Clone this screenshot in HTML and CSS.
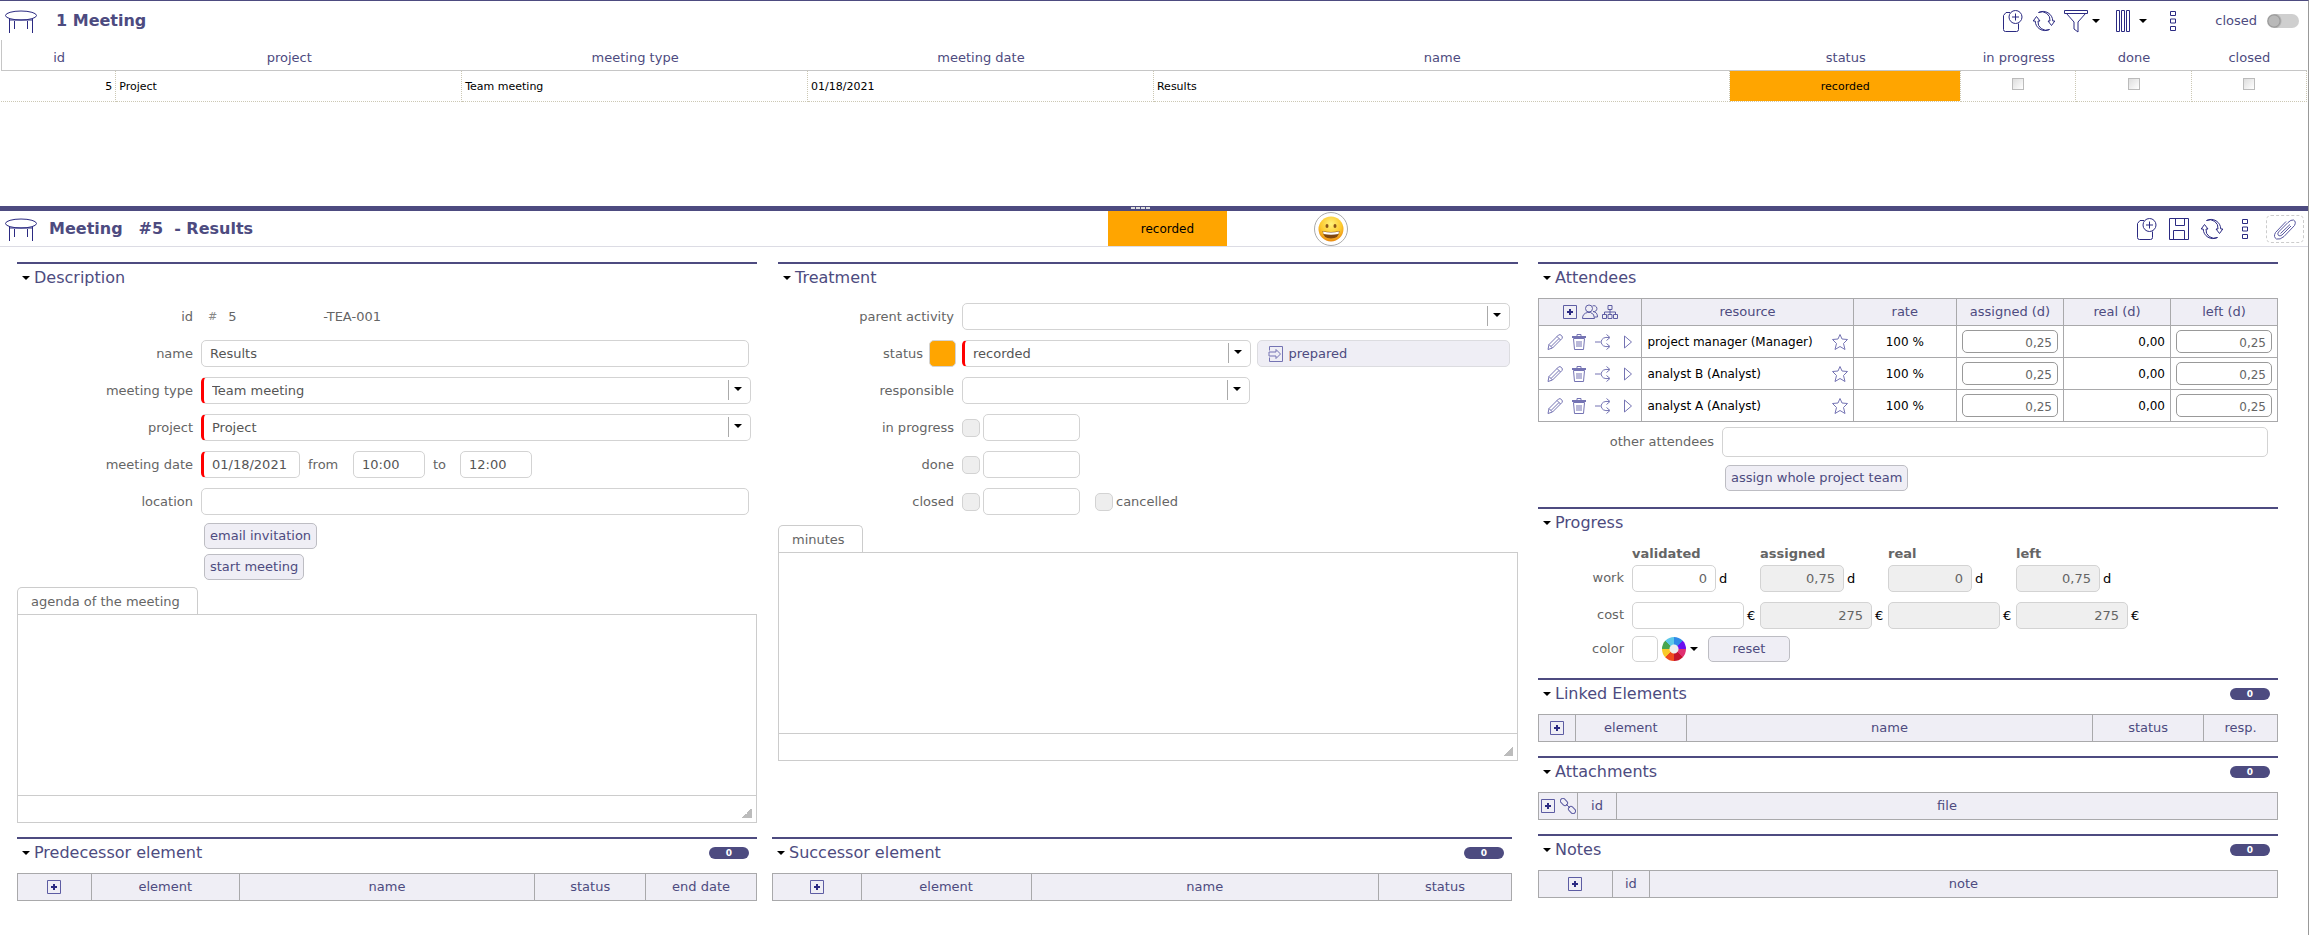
FILE: index.html
```
<!DOCTYPE html>
<html lang="en">
<head>
    <title>Meeting #5 - Results</title>
    <meta charset="UTF-8">
    <meta name="viewport" content="width=device-width, initial-scale=1.0">
    <link rel="stylesheet" href="styles.css">
</head>
<body>
    <!-- icon set -->
    <svg class="sprite" aria-hidden="true">
        <symbol id="i-meeting" viewBox="0 0 34 24"><ellipse cx="17" cy="6.500" rx="15.500" ry="4.500"/><path d="M5.500 9.500V24M28.500 9.500V24M10.500 20v-8M23.500 20v-8M5.500 11h23"/></symbol>
        <symbol id="i-add" viewBox="0 0 24 24"><path d="M10 3.500H6L3.500 6.500v14q0 2 2 2h11q2 0 2-2V14.500"/><circle cx="15.500" cy="8" r="6.500"/><path d="M15.500 4.500v7M12 8h7"/></symbol>
        <symbol id="i-refresh" viewBox="0 0 24 24"><path d="M3.200 12H1.200L4.500 7.500 8 12H6a8.200 8.200 0 0 0 11.500 8.500A9.800 9.800 0 0 1 3.200 12zM20.800 12h2l-3.300 4.500L16 12h2A8.200 8.200 0 0 0 6.500 3.500 9.800 9.800 0 0 1 20.800 12z"/></symbol>
        <symbol id="i-filter" viewBox="0 0 24 24"><path d="M.500 1.500h23v3H.500zM2.500 4.500L10 13v7l4 3V13l7.500-8.500"/></symbol>
        <symbol id="i-columns" viewBox="0 0 24 24"><path d="M5.500 1.500h3v21h-3zM10.500 1.500h3v21h-3zM15.500 1.500h3v21h-3z"/></symbol>
        <symbol id="i-dots" viewBox="0 0 24 24"><path d="M9.500 2.500h5v4h-5zM9.500 10h5v4h-5zM9.500 17.500h5v4h-5z"/></symbol>
        <symbol id="i-save" viewBox="0 0 24 24"><path d="M2.500 1.500h19v21h-19zM8.500 1.500v7h9v-7M6.500 22.500v-9h11v9"/></symbol>
        <symbol id="i-clip" viewBox="0 0 24 24"><path d="M18 9l-9 9q-2 1.500-3.500.500-1.500-1.500 0-3.500L15 5.500q3-3 5.500-2.500 3 1.500 1 5.500L11 19.500q-4 3.500-7.500 2.500-3.500-2-1-6.500L13 4.500M7.500 16.500l9.500-9"/></symbol>
        <symbol id="i-plus" viewBox="0 0 16 16"><path d="M1.500 1.500h13v13h-13z"/><path class="strong" d="M8 5v6M5 8h6"/></symbol>
        <symbol id="i-people" viewBox="0 0 16 16"><circle cx="7" cy="4.500" r="3.500"/><path d="M.500 14.500q0-5 5-6h3q4 1 4 6zM10.500 2a3 3 0 1 1 .5 5.500q4.500.5 4.500 5.500h-3"/></symbol>
        <symbol id="i-tree" viewBox="0 0 16 16"><path d="M6 1.500h4v4H6zM8 5.500V10M2.500 10V8h11v2M.500 10.500h4v4h-4zM6 10.500h4v4H6zM11.500 10.500h4v4h-4z"/></symbol>
        <symbol id="i-pencil" viewBox="0 0 16 16"><path d="M1 15.500l1-5L11.500 1q1.500-1 3 .5t.5 3L5.500 14zM2 10.500L5.500 14M10 2.500L13.500 6M4 12.500l8-8"/></symbol>
        <symbol id="i-trash" viewBox="0 0 16 16"><path d="M1 3.500h14M1 2.500h14M6 2.500v-2h4v2M2.500 4.500l1 11h9l1-11zM6 7v6M8 7v6M10 7v6"/></symbol>
        <symbol id="i-share" viewBox="0 0 16 16"><path d="M0 8h5.500M14 3.500q-7-1-8 4.500 1 5.500 8 4.500M11.500.500L15 3.500l-3.500 3M11.500 9.500l3.500 3-3.500 3"/></symbol>
        <symbol id="i-play" viewBox="0 0 16 16"><path d="M5.500 2v12l7-6z"/></symbol>
        <symbol id="i-star" viewBox="0 0 16 16"><path d="M8 .500l2 4.500 5.500.500-4 4 1.500 6-5-3-5 3 1.500-6-4-4L6 5z"/></symbol>
        <symbol id="i-link" viewBox="0 0 16 16"><rect x="-4" y="-2.500" width="8" height="5" rx="2.500" transform="translate(4 4) rotate(45)"/><rect x="-4" y="-2.500" width="8" height="5" rx="2.500" transform="translate(12 12) rotate(45)"/><path d="M6 6l4 4"/></symbol>
        <symbol id="i-move" viewBox="0 0 16 16"><path d="M1.500 4.500v-4h13v15h-13v-4M1 6h7V3.500L12.500 8 8 12.500V10H1z"/></symbol>
    </svg>

    <!-- list -->
    <section class="list">
        <header class="bar">
            <svg class="meeting-icon"><use href="#i-meeting"/></svg>
            <h1 class="list-title">1 Meeting</h1>
            <div class="tools">
                <button class="tool" aria-label="New"><svg><use href="#i-add"/></svg></button>
                <button class="tool" aria-label="Refresh"><svg><use href="#i-refresh"/></svg></button>
                <button class="tool drop" aria-label="Filter"><svg><use href="#i-filter"/></svg></button>
                <button class="tool drop columns" aria-label="Columns"><svg><use href="#i-columns"/></svg></button>
                <button class="tool more" aria-label="More"><svg><use href="#i-dots"/></svg></button>
                <label class="show-closed">closed <input type="checkbox" class="switch"></label>
            </div>
        </header>
        <table class="grid">
            <thead>
                <tr>
                    <th class="w5">id</th>
                    <th class="w15">project</th>
                    <th class="w15">meeting type</th>
                    <th class="w15">meeting date</th>
                    <th class="w25">name</th>
                    <th class="w10">status</th>
                    <th class="w5">in progress</th>
                    <th class="w5">done</th>
                    <th class="w5">closed</th>
                </tr>
            </thead>
            <tbody>
                <tr>
                    <td class="num">5</td>
                    <td>Project</td>
                    <td>Team meeting</td>
                    <td>01/18/2021</td>
                    <td>Results</td>
                    <td class="recorded">recorded</td>
                    <td class="tick"><input type="checkbox" aria-label="in progress" disabled></td>
                    <td class="tick"><input type="checkbox" aria-label="done" disabled></td>
                    <td class="tick"><input type="checkbox" aria-label="closed" disabled></td>
                </tr>
            </tbody>
        </table>
    </section>

    <div class="splitter"><span class="grip"></span></div>

    <!-- detail -->
    <header class="bar detail-bar">
        <div class="detail-title">
            <svg class="meeting-icon"><use href="#i-meeting"/></svg>
            <h2>Meeting</h2>
            <h2 class="ref">#5</h2>
            <h2>- Results</h2>
        </div>
        <div class="status-flag">recorded</div>
        <div class="avatar">
            <svg viewBox="0 0 26 26">
                <defs>
                    <radialGradient id="face" cx=".5" cy=".3" r=".7">
                        <stop offset="0" stop-color="#fff27a"/>
                        <stop offset=".6" stop-color="#fdc92d"/>
                        <stop offset="1" stop-color="#ea8a10"/>
                    </radialGradient>
                </defs>
                <circle cx="13" cy="13" r="12.500" fill="url(#face)"/>
                <ellipse cx="9" cy="10" rx="1.500" ry="2" fill="#8a5416"/>
                <ellipse cx="17" cy="10" rx="1.500" ry="2" fill="#8a5416"/>
                <path d="M4.500 15q8.500 2 17 0-.500 7.500-8.500 7.500T4.500 15z" fill="#80470f"/>
                <path d="M5 15.500q8 2 16 0l-.500 2.500q-7.500 1.500-15 0z" fill="#fff"/>
            </svg>
        </div>
        <div class="tools">
            <button class="tool" aria-label="New"><svg><use href="#i-add"/></svg></button>
            <button class="tool" aria-label="Save"><svg><use href="#i-save"/></svg></button>
            <button class="tool" aria-label="Refresh"><svg><use href="#i-refresh"/></svg></button>
            <button class="tool" aria-label="More"><svg><use href="#i-dots"/></svg></button>
            <button class="tool attach" aria-label="Attach a file"><svg><use href="#i-clip"/></svg></button>
        </div>
    </header>

    <main class="detail">
        <div class="left">
            <div class="pair">
                <section class="panel">
                    <h3>Description</h3>
                    <div class="form">
                        <div class="row">
                            <span class="label">id</span>
                            <span class="id-value"><small>#</small><span class="id-num">5</span><span>-TEA-001</span></span>
                        </div>
                        <div class="row">
                            <label class="label" for="name">name</label>
                            <input class="field" id="name" type="text" value="Results">
                        </div>
                        <div class="row wide">
                            <label class="label" for="type">meeting type</label>
                            <select class="field required" id="type"><option>Team meeting</option></select>
                        </div>
                        <div class="row wide">
                            <label class="label" for="project">project</label>
                            <select class="field required" id="project"><option>Project</option></select>
                        </div>
                        <div class="row">
                            <label class="label" for="date">meeting date</label>
                            <input class="field date required" id="date" type="text" value="01/18/2021">
                            <label class="from" for="start">from</label>
                            <input class="field time" id="start" type="text" value="10:00">
                            <label class="to" for="end">to</label>
                            <input class="field time" id="end" type="text" value="12:00">
                        </div>
                        <div class="row">
                            <label class="label" for="location">location</label>
                            <input class="field" id="location" type="text">
                        </div>
                    </div>
                    <div class="actions">
                        <button class="btn">email invitation</button>
                        <button class="btn">start meeting</button>
                    </div>
                    <div class="editor">
                        <label class="tab" for="agenda">agenda of the meeting</label>
                        <textarea id="agenda"></textarea>
                        <div class="editor-foot"></div>
                    </div>
                </section>

                <section class="panel">
                    <h3>Treatment</h3>
                    <div class="form">
                        <div class="row">
                            <label class="label" for="parent">parent activity</label>
                            <select class="field" id="parent"><option></option></select>
                        </div>
                        <div class="row status-row">
                            <label class="label" for="status">status</label>
                            <span class="swatch"></span>
                            <select class="field required" id="status"><option>recorded</option></select>
                            <button class="next-status"><svg><use href="#i-move"/></svg>prepared</button>
                        </div>
                        <div class="row">
                            <label class="label" for="responsible">responsible</label>
                            <select class="field half" id="responsible"><option></option></select>
                        </div>
                        <div class="row check-row">
                            <label class="label" for="inprogress">in progress</label>
                            <input class="check" id="inprogress" type="checkbox" disabled>
                            <input class="field day" type="text" aria-label="in progress date">
                        </div>
                        <div class="row check-row">
                            <label class="label" for="done">done</label>
                            <input class="check" id="done" type="checkbox" disabled>
                            <input class="field day" type="text" aria-label="done date">
                        </div>
                        <div class="row check-row">
                            <label class="label" for="closed">closed</label>
                            <input class="check" id="closed" type="checkbox" disabled>
                            <input class="field day" type="text" aria-label="closed date">
                            <input class="check cancel" id="cancelled" type="checkbox" disabled>
                            <label for="cancelled">cancelled</label>
                        </div>
                    </div>
                    <div class="editor minutes">
                        <label class="tab" for="minutes">minutes</label>
                        <textarea id="minutes"></textarea>
                        <div class="editor-foot"></div>
                    </div>
                </section>
            </div>

            <div class="pair links">
                <section class="panel">
                    <h3>Predecessor element <span class="count">0</span></h3>
                    <table class="data">
                        <tr>
                            <th class="w10"><button class="mini" aria-label="Add predecessor"><svg><use href="#i-plus"/></svg></button></th>
                            <th class="w20">element</th>
                            <th class="w40">name</th>
                            <th class="w15">status</th>
                            <th class="w15">end date</th>
                        </tr>
                    </table>
                </section>
                <section class="panel">
                    <h3>Successor element <span class="count">0</span></h3>
                    <table class="data">
                        <tr>
                            <th class="w12"><button class="mini" aria-label="Add successor"><svg><use href="#i-plus"/></svg></button></th>
                            <th class="w23">element</th>
                            <th class="w47">name</th>
                            <th class="w18">status</th>
                        </tr>
                    </table>
                </section>
            </div>
        </div>

        <div class="right">
            <section class="panel">
                <h3>Attendees</h3>
                <table class="data attendees">
                    <thead>
                        <tr>
                            <th class="w14"><div class="icons head">
                                <button class="mini" aria-label="Add attendee"><svg><use href="#i-plus"/></svg></button>
                                <button class="mini" aria-label="Add team"><svg><use href="#i-people"/></svg></button>
                                <button class="mini" aria-label="Add organization"><svg><use href="#i-tree"/></svg></button>
                            </div></th>
                            <th>resource</th>
                            <th class="w14">rate</th>
                            <th class="days">assigned (d)</th>
                            <th class="days">real (d)</th>
                            <th class="days">left (d)</th>
                        </tr>
                    </thead>
                    <tbody>
                        <tr>
                            <td><div class="icons">
                                <button class="mini" aria-label="Edit"><svg><use href="#i-pencil"/></svg></button>
                                <button class="mini" aria-label="Delete"><svg><use href="#i-trash"/></svg></button>
                                <button class="mini" aria-label="Divide"><svg><use href="#i-share"/></svg></button>
                                <button class="mini" aria-label="Go to"><svg><use href="#i-play"/></svg></button>
                            </div></td>
                            <td><div class="person">project manager (Manager) <button class="mini" aria-label="Optional"><svg><use href="#i-star"/></svg></button></div></td>
                            <td class="center">100 %</td>
                            <td><input type="text" value="0,25" aria-label="assigned"></td>
                            <td class="num">0,00</td>
                            <td><input type="text" value="0,25" aria-label="left"></td>
                        </tr>
                        <tr>
                            <td><div class="icons">
                                <button class="mini" aria-label="Edit"><svg><use href="#i-pencil"/></svg></button>
                                <button class="mini" aria-label="Delete"><svg><use href="#i-trash"/></svg></button>
                                <button class="mini" aria-label="Divide"><svg><use href="#i-share"/></svg></button>
                                <button class="mini" aria-label="Go to"><svg><use href="#i-play"/></svg></button>
                            </div></td>
                            <td><div class="person">analyst B (Analyst) <button class="mini" aria-label="Optional"><svg><use href="#i-star"/></svg></button></div></td>
                            <td class="center">100 %</td>
                            <td><input type="text" value="0,25" aria-label="assigned"></td>
                            <td class="num">0,00</td>
                            <td><input type="text" value="0,25" aria-label="left"></td>
                        </tr>
                        <tr>
                            <td><div class="icons">
                                <button class="mini" aria-label="Edit"><svg><use href="#i-pencil"/></svg></button>
                                <button class="mini" aria-label="Delete"><svg><use href="#i-trash"/></svg></button>
                                <button class="mini" aria-label="Divide"><svg><use href="#i-share"/></svg></button>
                                <button class="mini" aria-label="Go to"><svg><use href="#i-play"/></svg></button>
                            </div></td>
                            <td><div class="person">analyst A (Analyst) <button class="mini" aria-label="Optional"><svg><use href="#i-star"/></svg></button></div></td>
                            <td class="center">100 %</td>
                            <td><input type="text" value="0,25" aria-label="assigned"></td>
                            <td class="num">0,00</td>
                            <td><input type="text" value="0,25" aria-label="left"></td>
                        </tr>
                    </tbody>
                </table>
                <div class="row others">
                    <label class="label" for="others">other attendees</label>
                    <input class="field" id="others" type="text">
                </div>
                <div class="actions">
                    <button class="btn">assign whole project team</button>
                </div>
            </section>

            <section class="panel">
                <h3>Progress</h3>
                <div class="progress">
                    <span></span><b>validated</b><b>assigned</b><b>real</b><b>left</b>
                    <span class="label">work</span>
                    <label class="amount"><input class="field" type="text" value="0" aria-label="validated work">d</label>
                    <label class="amount"><input class="field" type="text" value="0,75" readonly aria-label="assigned work">d</label>
                    <label class="amount"><input class="field" type="text" value="0" readonly aria-label="real work">d</label>
                    <label class="amount"><input class="field" type="text" value="0,75" readonly aria-label="left work">d</label>
                    <span class="label">cost</span>
                    <label class="amount cost"><input class="field" type="text" aria-label="validated cost">€</label>
                    <label class="amount cost"><input class="field" type="text" value="275" readonly aria-label="assigned cost">€</label>
                    <label class="amount cost"><input class="field" type="text" readonly aria-label="real cost">€</label>
                    <label class="amount cost"><input class="field" type="text" value="275" readonly aria-label="left cost">€</label>
                </div>
                <div class="color-row">
                    <span class="label">color</span>
                    <span class="color-box"></span>
                    <button class="wheel drop" aria-label="Pick a color"><span class="disc"></span></button>
                    <button class="btn reset">reset</button>
                </div>
            </section>

            <section class="panel">
                <h3>Linked Elements <span class="count">0</span></h3>
                <table class="data">
                    <tr>
                        <th class="w5"><button class="mini" aria-label="Add link"><svg><use href="#i-plus"/></svg></button></th>
                        <th class="w15">element</th>
                        <th class="w55">name</th>
                        <th class="w15">status</th>
                        <th class="w10">resp.</th>
                    </tr>
                </table>
            </section>

            <section class="panel">
                <h3>Attachments <span class="count">0</span></h3>
                <table class="data">
                    <tr>
                        <th class="slim"><div class="icons head">
                            <button class="mini" aria-label="Add file"><svg><use href="#i-plus"/></svg></button>
                            <button class="mini" aria-label="Add hyperlink"><svg><use href="#i-link"/></svg></button>
                        </div></th>
                        <th class="slim">id</th>
                        <th>file</th>
                    </tr>
                </table>
            </section>

            <section class="panel">
                <h3>Notes <span class="count">0</span></h3>
                <table class="data">
                    <tr>
                        <th class="w10"><button class="mini" aria-label="Add note"><svg><use href="#i-plus"/></svg></button></th>
                        <th class="w5">id</th>
                        <th class="w85">note</th>
                    </tr>
                </table>
            </section>
        </div>
    </main>
</body>
</html>
```
FILE: styles.css
```
:root {
  --main: #4d4b80;
  --icon: #2b2a82;
  --icon-light: #7473b3;
  --head: #efeef5;
  --line: #a9a9ab;
  --edge: #d3d3d3;
  --text: #656565;
  --orange: #ffa500;
  --caret: url("data:image/svg+xml,%3Csvg xmlns='http://www.w3.org/2000/svg' width='8' height='4'%3E%3Cpath d='M0 0h8L4 4z'/%3E%3C/svg%3E");
}

*{
    box-sizing: border-box;
}
body{
    margin: 0;
    min-height: 100vh;
    border-top: 1px solid var(--main);
    border-right: 1px solid #999;
    background-color: #fff;
    color: var(--text);
    font-family: "DejaVu Sans", Verdana, sans-serif;
    font-size: 13px;
    line-height: 16px;
}
button, input, select, textarea{
    font: inherit;
    color: inherit;
    margin: 0;
}
button{
    padding: 0;
    border: 0;
    background: none;
}
h1, h2, h3{
    margin: 0;
    font-size: 16px;
    color: var(--main);
}
svg{
    display: block;
    fill: none;
    stroke: var(--icon);
    stroke-width: 1px;
}
.sprite{
    display: none;
}
.strong{
    stroke: var(--icon);
    stroke-width: 2px;
}

/* header bars */
.bar{
    display: flex;
    align-items: center;
    height: 39px;
    padding-right: 9px;
}
.meeting-icon{
    width: 34px;
    height: 24px;
    margin-left: 4px;
}
.list-title{
    margin-left: 18px;
}
.tools{
    display: flex;
    align-items: center;
    gap: 8px;
    margin-left: auto;
}
.tool{
    display: flex;
    align-items: center;
}
.tool svg{
    width: 24px;
    height: 24px;
}
.drop::after{
    content: "";
    width: 8px;
    height: 4px;
    margin-left: 4px;
    background: var(--caret);
}
.columns{
    margin-left: 3px;
}
.more{
    margin-left: 6px;
}
.show-closed{
    display: flex;
    align-items: center;
    gap: 10px;
    margin-left: 22px;
    color: var(--main);
}
.switch{
    appearance: none;
    width: 32px;
    height: 14px;
    border-radius: 7px;
    background: radial-gradient(circle at 7px 7px, #b9b9b9 5px, #999 6px, #cfcfcf 8px);
}

/* list grid */
.list{
    min-height: 205px;
}
.grid{
    width: calc(100% - 2px);
    margin-left: 1px;
    table-layout: fixed;
    border-spacing: 0;
    font-size: 11px;
    color: #000;
}
.grid th{
    height: 31px;
    padding: 6px 0 0;
    border-bottom: 1px solid #c6c6c6;
    font-size: 13px;
    font-weight: normal;
    color: var(--main);
}
.grid th:first-child{
    border-left: 1px solid #c6c6c6;
}
.grid td{
    height: 31px;
    padding: 2px 3px 0;
    border-right: 1px dotted #ccc8b4;
    border-bottom: 1px dotted #ccc8b4;
}
.grid .num{
    text-align: right;
}
.grid .recorded{
    background: var(--orange) padding-box;
    text-align: center;
}
.grid .tick{
    text-align: center;
    vertical-align: top;
}
.tick input{
    appearance: none;
    width: 12px;
    height: 12px;
    margin-top: 5px;
    border: 1px solid #bbb;
    background: linear-gradient(135deg, #ddd, #fff);
}
.w5{ width: 5%; }
.w10{ width: 10%; }
.w12{ width: 12%; }
.w14{ width: 14%; }
.w15{ width: 15%; }
.w18{ width: 18%; }
.w20{ width: 20%; }
.w23{ width: 23%; }
.w25{ width: 25%; }
.w40{ width: 40%; }
.w47{ width: 47%; }
.w55{ width: 55%; }
.w85{ width: 85%; }
.days{ width: 107px; }
.slim{ width: 39px; }

.splitter{
    display: flex;
    justify-content: center;
    height: 5px;
    padding: 1px 26px 2px 0;
    background-color: var(--main);
}
.grip{
    width: 20px;
    background: repeating-linear-gradient(90deg, #ddd 0 4px, var(--main) 4px 5px);
}

/* detail header */
.detail-bar{
    height: 36px;
    padding-right: 4px;
    border-bottom: 1px solid #dcdce4;
}
.detail-bar .tools{
    gap: 9px;
}
.detail-title{
    display: flex;
    align-items: center;
    width: calc(48% + 2px);
}
.detail-title h2{
    margin-left: 11px;
}
.detail-title .ref{
    margin-left: 16px;
}
.status-flag{
    width: 119px;
    align-self: stretch;
    display: flex;
    align-items: center;
    justify-content: center;
    background-color: var(--orange);
    color: #000;
    font-size: 12px;
}
.avatar{
    width: 34px;
    height: 34px;
    margin-left: 87px;
    padding: 3px;
    border: 1px solid #aaa;
    border-radius: 50%;
}
.avatar svg{
    stroke: none;
}
.attach{
    width: 38px;
    height: 28px;
    justify-content: center;
    border: 1px dashed #ccc;
    border-radius: 5px;
}
.attach svg{
    stroke: #5857a0;
}

/* panels */
.detail{
    display: grid;
    grid-template-columns: 1501fr 740fr;
    gap: 20px;
    padding: 15px 30px 15px 17px;
}
.left, .right{
    display: flex;
    flex-direction: column;
    gap: 14px;
}
.pair{
    display: grid;
    grid-template-columns: 1fr 1fr;
    gap: 21px;
}
.links{
    gap: 15px;
    padding-right: 6px;
}
.panel{
    border-top: 2px solid var(--main);
}
.panel h3{
    display: flex;
    align-items: center;
    height: 28px;
    margin-bottom: 6px;
    padding: 0 8px 0 5px;
    font-weight: normal;
}
.panel h3::before{
    content: "";
    width: 8px;
    height: 4px;
    margin-right: 4px;
    background: var(--caret);
}
.count{
    width: 40px;
    height: 12px;
    margin-left: auto;
    border-radius: 6px;
    background-color: var(--main);
    color: #fff;
    font-size: 9px;
    font-weight: bold;
    line-height: 12px;
    text-align: center;
}

/* forms */
.form{
    display: flex;
    flex-direction: column;
    gap: 10px;
    padding-top: 5px;
}
.row{
    display: flex;
    align-items: center;
    gap: 8px;
    min-height: 27px;
    padding-right: 8px;
}
.wide{
    padding-right: 6px;
}
.label{
    flex: 0 0 176px;
    text-align: right;
}
.field{
    flex: 1;
    min-width: 0;
    height: 27px;
    padding: 0 8px;
    border: 1px solid var(--edge);
    border-radius: 5px;
    background-color: #fff;
    color: #555;
}
select.field{
    appearance: none;
    background-image: var(--caret), linear-gradient(#aaa, #aaa);
    background-size: 8px 4px, 1px 20px;
    background-position: right 8px top 9px, right 21px top 2px;
    background-repeat: no-repeat;
}
.required{
    border-left: 3px solid #f00;
}
.date{
    flex: 0 0 99px;
    padding-right: 4px;
}
.time{
    flex: 0 0 72px;
}
.from{
    width: 37px;
}
.to{
    width: 19px;
}
.id-value{
    display: flex;
    align-items: center;
    padding-left: 7px;
}
.id-value small{
    font-size: 11px;
    color: #888;
}
.id-num{
    width: 95px;
    margin-left: 11px;
}
.status-row{
    gap: 6px;
}
.status-row .label{
    flex-basis: 145px;
}
.status-row .field{
    flex-grow: 28;
}
.swatch{
    width: 27px;
    height: 27px;
    border: 1px solid var(--edge);
    border-radius: 5px;
    background-color: var(--orange);
}
.next-status{
    flex: 25 1 0;
    display: flex;
    align-items: center;
    gap: 4px;
    height: 27px;
    padding-left: 10px;
    border: 1px solid #dcdce0;
    border-radius: 5px;
    background-color: var(--head);
    color: var(--main);
}
.next-status svg{
    stroke: var(--icon-light);
    width: 16px;
    height: 16px;
}
.half{
    flex: 0 0 288px;
}
.check-row{
    gap: 3px;
}
.check-row .label{
    flex-basis: 181px;
    padding-right: 5px;
}
.check{
    appearance: none;
    width: 18px;
    height: 18px;
    border: 1px solid var(--edge);
    border-radius: 5px;
    background-color: #eee;
}
.day{
    flex: 0 0 97px;
}
.cancel{
    margin-left: 12px;
}
.btn{
    height: 26px;
    padding: 0 5px;
    border: 1px solid #bdbdc3;
    border-radius: 5px;
    background-color: var(--head);
    color: var(--main);
}
.actions{
    display: flex;
    flex-direction: column;
    align-items: flex-start;
    gap: 5px;
    margin: 8px 0 0 187px;
}

/* text editors */
.editor{
    display: flex;
    flex-direction: column;
    margin-top: 7px;
}
.minutes{
    margin-top: 10px;
}
.tab{
    align-self: flex-start;
    height: 27px;
    padding: 0 17px 0 13px;
    border: 1px solid #ccc;
    border-bottom: 0;
    border-radius: 5px 5px 0 0;
    line-height: 28px;
}
.editor textarea{
    height: 182px;
    padding: 8px;
    border: 1px solid #ccc;
    resize: none;
}
.editor-foot{
    height: 27px;
    border: 1px solid #ccc;
    border-top: 0;
    background: linear-gradient(135deg, transparent 50%, #bcbcbc 50%) no-repeat right 4px bottom 4px / 10px 10px;
}

/* data tables */
.data{
    width: 100%;
    table-layout: fixed;
    border-collapse: collapse;
    color: #000;
}
.data th, .data td{
    padding: 0;
    border: 1px solid var(--line);
}
.data th{
    height: 27px;
    background-color: var(--head);
    color: var(--main);
    font-weight: normal;
}
.mini{
    width: 16px;
    height: 16px;
    vertical-align: middle;
}
.mini svg{
    width: 16px;
    height: 16px;
    stroke: var(--icon-light);
}
th .mini svg{
    stroke: #5d5ca3;
}
.icons{
    display: flex;
    gap: 8px;
    padding-left: 8px;
}
.icons.head{
    justify-content: center;
    gap: 4px;
    padding: 0;
}
.attendees td{
    height: 32px;
    padding: 0 5px;
    font-size: 12px;
}
.attendees td:first-child{
    padding: 0;
}
.attendees td input{
    display: block;
    width: 100%;
    height: 23px;
    padding: 2px 5px 0;
    border: 1px solid #999;
    border-radius: 5px;
    color: #656565;
    text-align: right;
}
.person{
    display: flex;
    justify-content: space-between;
}
.data .center{
    text-align: center;
}
.data .num{
    text-align: right;
}
.others{
    margin-top: 5px;
    padding-right: 10px;
}
.others .field{
    height: 30px;
}
.right .actions{
    margin-bottom: 2px;
}

/* progress */
.progress{
    display: grid;
    grid-template-columns: 94px repeat(4, 128px);
    grid-template-rows: 22px;
    align-items: center;
}
.progress .label, .color-row .label{
    padding-right: 8px;
}
.amount{
    display: flex;
    align-items: center;
    gap: 3px;
    padding-bottom: 10px;
    color: #000;
}
.progress .label{
    padding-bottom: 12px;
}
.amount .field{
    flex: 0 0 84px;
    text-align: right;
    color: #656565;
}
.amount .field:read-only{
    background-color: #efefef;
}
.cost .field{
    flex-basis: 112px;
}
.color-row{
    display: flex;
    align-items: center;
    margin-bottom: 2px;
    margin-top: -3px;
}
.color-row .label{
    flex-basis: 94px;
}
.color-box{
    width: 26px;
    height: 26px;
    border: 1px solid var(--edge);
    border-radius: 5px;
}
.wheel{
    display: flex;
    align-items: center;
    margin-left: 4px;
}
.disc{
    width: 24px;
    height: 24px;
    border-radius: 50%;
    background: radial-gradient(circle, #eee 4px, transparent 5px), conic-gradient(#2f8ae8 45deg, #6a10f0 45deg 90deg, #e02f70 90deg 135deg, #c4122c 135deg 180deg, #f04a1c 180deg 225deg, #f9c928 225deg 270deg, #48a550 270deg 315deg, #5cc8e8 315deg);
}
.reset{
    width: 82px;
    margin-left: 10px;
}
```
